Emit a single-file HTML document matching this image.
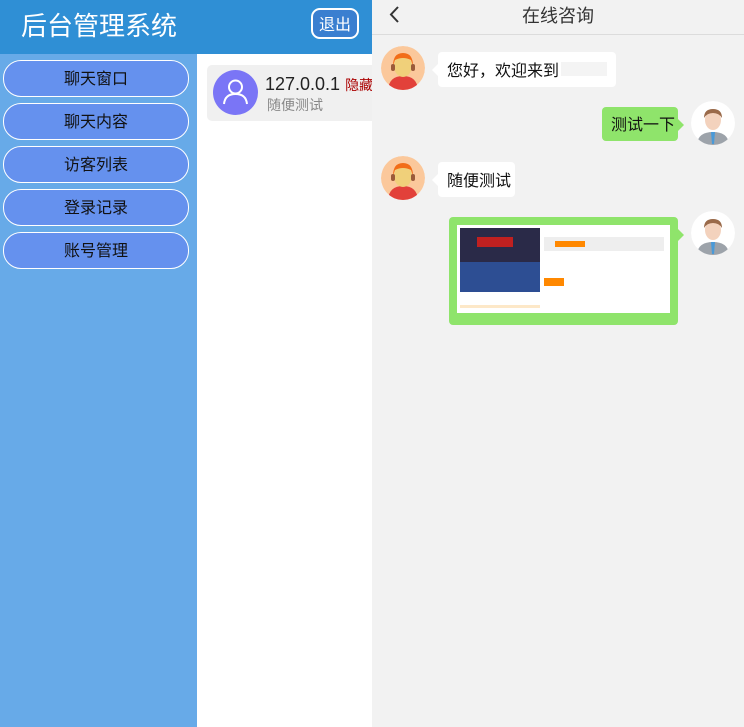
<!DOCTYPE html>
<html><head><meta charset="utf-8"><style>
*{margin:0;padding:0;box-sizing:border-box}
body{width:744px;height:727px;overflow:hidden;position:relative;font-family:"Liberation Sans","Noto Sans CJK SC",sans-serif;background:#fff}
.hdr{position:absolute;left:0;top:0;width:372px;height:54px;background:#2f8fd5}
.hdr h1{position:absolute;left:21px;top:0;height:48px;display:flex;align-items:center;color:#fff;font-size:26px;font-weight:normal}
.out{position:absolute;left:311px;top:8px;width:48px;height:31px;border:2px solid #fff;border-radius:9px;background:#3a7fd0;color:#fff;font-size:16px;display:flex;align-items:center;justify-content:center;padding-bottom:2px}
.side{position:absolute;left:0;top:54px;width:197px;height:673px;background:#67aae8}
.btn{position:absolute;left:3px;width:186px;height:37px;border:1.5px solid #fff;border-radius:18px;background:#6591ee;color:#111;font-size:16px;display:flex;align-items:center;justify-content:center;padding-bottom:3px}
.mid{position:absolute;left:197px;top:54px;width:175px;height:673px;background:#fff}
.item{position:absolute;left:10px;top:11px;width:170px;height:56px;background:#f0f0f0;border-radius:5px}
.av{position:absolute;left:6px;top:5px;width:45px;height:45px;border-radius:50%;background:#7a75f6}
.right{position:absolute;left:372px;top:0;width:372px;height:727px;background:#f2f2f2}
.rh{height:35px;border-bottom:1px solid #dcdcdc;display:flex;align-items:center;justify-content:center;font-size:18px;color:#333;padding-bottom:4px}
.b{position:absolute;background:#fff;border-radius:4px;font-size:16px;color:#111;padding:0 9px 2px;height:35px;display:flex;align-items:center;white-space:nowrap}
.b.l:before{content:"";position:absolute;left:-6px;top:12px;border:6px solid transparent;border-left:0;border-right-color:#fff}
.g{background:#8fe46b}
.b.g:after{content:"";position:absolute;right:-6px;top:12px;border:6px solid transparent;border-right:0;border-left-color:#8fe46b}
.ca{position:absolute;width:44px;height:44px;border-radius:50%;overflow:hidden}
</style></head><body>
<div class="hdr"><h1>后台管理系统</h1><div class="out">退出</div></div>
<div class="side">
<div class="btn" style="top:6px">聊天窗口</div>
<div class="btn" style="top:49px">聊天内容</div>
<div class="btn" style="top:92px">访客列表</div>
<div class="btn" style="top:135px">登录记录</div>
<div class="btn" style="top:178px">账号管理</div>
</div>
<div class="mid"><div class="item">
<div class="av"><svg width="45" height="45" viewBox="0 0 45 45"><circle cx="22.5" cy="17" r="6.5" fill="none" stroke="#fff" stroke-width="2"/><path d="M11 34 Q12 24 22.5 24 Q33 24 34 34" fill="none" stroke="#fff" stroke-width="2"/></svg></div>
<div style="position:absolute;left:58px;top:8px;font-size:18px;line-height:22px;color:#222;white-space:nowrap">127.0.0.1 <span style="font-size:14px;color:#a00">隐藏</span></div>
<div style="position:absolute;left:60px;top:31px;font-size:14px;line-height:18px;color:#888">随便测试</div>
</div></div>
<div class="right">
<div class="rh">在线咨询</div>
<svg style="position:absolute;left:16px;top:5px" width="14" height="20" viewBox="0 0 14 20"><path d="M10 2 L3 9.5 L10 17" fill="none" stroke="#333" stroke-width="2"/></svg>
</div>
<svg width="0" height="0" style="position:absolute"><defs>
<g id="kf"><circle cx="22" cy="22" r="22" fill="#fbc89b"/><path d="M7 44 Q8 30 22 30 Q36 30 37 44Z" fill="#e2413a"/><ellipse cx="22" cy="20" rx="9" ry="11" fill="#f0d07a"/><path d="M12 20 Q12 7 22 7 Q32 7 32 20 L30 14 Q22 10 14 14Z" fill="#f26d17"/><rect x="10" y="18" width="4" height="7" rx="2" fill="#9b5a3a"/><rect x="30" y="18" width="4" height="7" rx="2" fill="#9b5a3a"/></g>
<g id="us"><circle cx="22" cy="22" r="22" fill="#fff"/><path d="M6 42 Q8 31 22 31 Q36 31 38 42 Q30 46 22 46 Q14 46 6 42Z" fill="#9da3aa"/><path d="M20 31 L24 31 L23 43 L21 43Z" fill="#4a9ad8"/><ellipse cx="22" cy="19" rx="8" ry="10" fill="#f3d2bd"/><path d="M13 17 Q13 8 22 8 Q31 8 31 17 Q28 12 22 12 Q16 12 13 17Z" fill="#9a6a4a"/></g>
</defs></svg>
<svg class="ca" style="left:381px;top:46px" viewBox="0 0 44 44"><use href="#kf"/></svg>
<div class="b l" style="left:438px;top:52px;width:178px">您好，欢迎来到<span style="display:inline-block;width:48px;height:14px;background:#f4f4f4;margin-left:2px"></span></div>
<div class="b g" style="left:602px;top:107px;width:76px;height:34px">测试一下</div>
<svg class="ca" style="left:691px;top:101px" viewBox="0 0 44 44"><use href="#us"/></svg>
<svg class="ca" style="left:381px;top:156px" viewBox="0 0 44 44"><use href="#kf"/></svg>
<div class="b l" style="left:438px;top:162px;width:77px">随便测试</div>
<div class="g" style="position:absolute;left:449px;top:217px;width:229px;height:108px;border-radius:4px">
<div style="position:absolute;left:8px;top:8px;width:213px;height:88px;background:#fff">
<div style="position:absolute;left:3px;top:3px;width:80px;height:64px;background:#2a2a48"></div>
<div style="position:absolute;left:3px;top:37px;width:80px;height:30px;background:#2d4e93"></div>
<div style="position:absolute;left:20px;top:12px;width:36px;height:10px;background:#c02020"></div>
<div style="position:absolute;left:87px;top:12px;width:120px;height:14px;background:#eee"></div>
<div style="position:absolute;left:98px;top:16px;width:30px;height:6px;background:#f80"></div>
<div style="position:absolute;left:87px;top:53px;width:20px;height:8px;background:#f80"></div>
<div style="position:absolute;left:3px;top:80px;width:80px;height:3px;background:#fde8c8"></div>
</div></div>
<svg class="ca" style="left:691px;top:211px" viewBox="0 0 44 44"><use href="#us"/></svg>
<div style="position:absolute;left:678px;top:229px;border:6px solid transparent;border-right:0;border-left-color:#8fe46b"></div>
</body></html>
